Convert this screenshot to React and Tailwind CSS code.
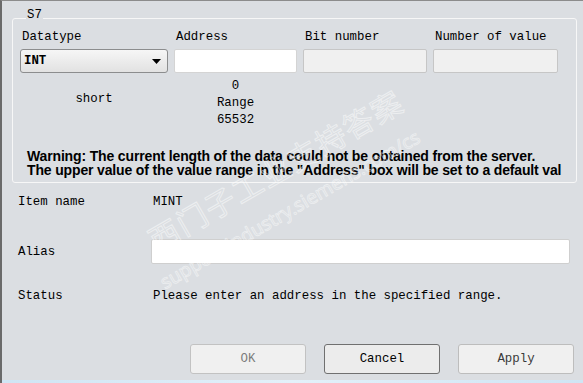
import React from 'react';

const mono = "font-[family-name:'Liberation_Mono','Courier_New',monospace] text-[12.4px] text-black";

const Field = ({ label, children }) => (
  <div className="flex flex-col">
    <div className="pl-[2px] leading-[16px]">{label}</div>
    <div className="mt-[4px]">{children}</div>
  </div>
);

const DisabledBox = () => (
  <div className="h-[24px] rounded-[2px] border border-[#c6c6c6] bg-[#f0f0f0]" />
);

const Button = ({ children, variant }) => (
  <button
    className={
      variant === 'default'
        ? 'h-[30px] w-[116px] rounded-[3px] border border-[#707070] bg-[#ececec] text-black'
        : variant === 'disabled'
        ? 'h-[30px] w-[116px] rounded-[3px] border border-[#c2c2c2] bg-[#f0f0f0] text-[#7c7c7c]'
        : 'h-[30px] w-[116px] rounded-[3px] border border-[#bdbdbd] bg-[#f0f0f0] text-[#3a3a3a]'
    }
  >
    {children}
  </button>
);

export default function App() {
  return (
    <div className={`relative flex h-[383px] w-[583px] flex-col overflow-hidden border-l-2 border-t border-l-[#6a6a6a] border-t-[#8c8c8c] bg-[#dbdee2] ${mono}`}>
      {/* S7 group */}
      <fieldset className="ml-[10px] mt-[8px] h-[174px] w-[565px] rounded-[3px] border border-[#f7f7f7] pl-[7px]">
        <legend className="ml-[6px] px-[1px] pb-[6px] leading-[12px]">S7</legend>

        <div className="mt-[2px] grid grid-cols-[148px_123px_124px_125px] gap-x-[6px]">
          <Field label="Datatype">
            <div className="flex h-[24px] items-center justify-between rounded-[3px] border border-[#8c8d8e] bg-gradient-to-b from-[#f6f6f6] to-[#e2e2e2] pl-[3px] pr-[6px]">
              <span className="font-bold">INT</span>
              <svg width="9" height="5" viewBox="0 0 9 5">
                <path d="M0 0 L9 0 L4.5 5 Z" fill="#000" />
              </svg>
            </div>
          </Field>
          <Field label="Address">
            <div className="h-[24px] rounded-[2px] border border-[#d4d4d4] bg-white" />
          </Field>
          <Field label="Bit number">
            <DisabledBox />
          </Field>
          <Field label="Number of value">
            <DisabledBox />
          </Field>

          <div className="pt-[18px] text-center leading-[17px]">short</div>
          <div className="mt-[5px] flex flex-col items-center leading-[17px]">
            <span>0</span>
            <span>Range</span>
            <span>65532</span>
          </div>
        </div>

        <div className="mt-[20px] pl-[7px] font-[family-name:'Liberation_Sans',Arial,sans-serif] text-[14px] font-bold leading-[14px] tracking-[-0.15px] whitespace-nowrap">
          <div>Warning: The current length of the data could not be obtained from the server.</div>
          <div>The upper value of the value range in the "Address" box will be set to a default val</div>
        </div>
      </fieldset>

      {/* item rows */}
      <div className="grid grid-cols-[133px_419px] items-center pl-[16px]">
        <div className="mt-[11px] leading-[16px]">Item name</div>
        <div className="mt-[11px] pl-[2px] leading-[16px]">MINT</div>

        <div className="mt-[29px] leading-[16px]">Alias</div>
        <div className="mt-[29px] h-[25px] rounded-[2px] border border-[#cfcfcf] bg-white" />

        <div className="mt-[24px] leading-[16px]">Status</div>
        <div className="mt-[24px] pl-[2px] leading-[16px]">Please enter an address in the specified range.</div>
      </div>

      <div className="mt-[40px] flex justify-end gap-[18px] pr-[9px]">
        <Button variant="disabled">OK</Button>
        <Button variant="default">Cancel</Button>
        <Button>Apply</Button>
      </div>

      <div className="mt-auto h-[3px] bg-gradient-to-r from-[#cfe5f4] via-[#e3f1fa] to-[#cfe5f4]" />

      {/* watermark */}
      <div className="pointer-events-none absolute left-[157px] top-[221px] origin-bottom-left -rotate-[30deg] whitespace-nowrap font-[family-name:'Noto_Sans_CJK_SC',sans-serif] text-[30px] leading-[34px] tracking-[2px] text-transparent [-webkit-text-stroke:1px_rgba(255,255,255,0.5)]">
        西门子工业支持答案
      </div>
      <div className="pointer-events-none absolute left-[165px] top-[270px] origin-bottom-left -rotate-[30deg] whitespace-nowrap font-[family-name:'Noto_Sans',sans-serif] text-[19px] leading-[22px] text-transparent [-webkit-text-stroke:0.8px_rgba(255,255,255,0.5)]">
        support.industry.siemens.com/cs
      </div>
    </div>
  );
}
